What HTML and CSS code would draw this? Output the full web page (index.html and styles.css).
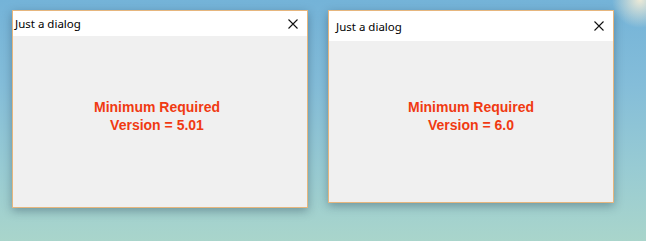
FILE: index.html
```html
<!DOCTYPE html>
<html lang="en">
<head>
  <meta charset="UTF-8" />
  <title>Just a dialog</title>
  <link rel="stylesheet" href="styles.css">
</head>
<body>
  <div class="desktop">
    <div class="dialog dialog-a">
      <div class="titlebar">
        <span class="title">Just a dialog</span>
        <svg class="close" width="10" height="10" viewBox="0 0 10 10">
          <path d="M0.5 0.5 L9.5 9.5 M9.5 0.5 L0.5 9.5" stroke="#111" stroke-width="1.1" fill="none" />
        </svg>
      </div>
      <div class="content">
        <p class="message">Minimum Required<br/>Version = 5.01</p>
      </div>
    </div>

    <div class="dialog dialog-b">
      <div class="titlebar">
        <span class="title">Just a dialog</span>
        <svg class="close" width="10" height="10" viewBox="0 0 10 10">
          <path d="M0.5 0.5 L9.5 9.5 M9.5 0.5 L0.5 9.5" stroke="#111" stroke-width="1.1" fill="none" />
        </svg>
      </div>
      <div class="content">
        <p class="message">Minimum Required<br/>Version = 6.0</p>
      </div>
    </div>
  </div>
</body>
</html>
```

FILE: styles.css
```css
html, body {
  margin: 0;
  height: 100%;
}
body {
  font-family: "Liberation Sans", Arial, sans-serif;
  background:
    radial-gradient(circle at 640px 0px, rgba(250,240,215,0.9) 0, rgba(250,240,215,0) 28px),
    linear-gradient(180deg, #74b3d8 0%, #84bdd9 35%, #98cbd3 70%, #a9d5cb 100%);
  overflow: hidden;
}
.desktop {
  display: flex;
  align-items: flex-start;
  gap: 20px;
  padding: 10px 0 0 12px;
}
.dialog {
  display: flex;
  flex-direction: column;
  box-sizing: border-box;
  border: 1px solid #e6b67e;
  background-color: #f0f0f0;
  box-shadow: 0 3px 9px rgba(20,40,60,0.35);
}
.dialog-a {
  width: 296px;
  height: 198px;
}
.dialog-b {
  width: 286px;
  height: 193px;
}
.titlebar {
  display: flex;
  align-items: center;
  justify-content: space-between;
  background-color: #fff;
  padding-right: 9px;
  flex: none;
}
.dialog-a .titlebar {
  height: 25px;
  padding-left: 2px;
}
.dialog-b .titlebar {
  height: 30px;
  padding-left: 7px;
}
.title {
  font-family: "Noto Sans", "Open Sans", sans-serif;
  font-size: 11.5px;
  color: #000;
}
.close {
  display: block;
}
.content {
  flex: 1;
  display: flex;
  align-items: center;
  justify-content: center;
  padding-bottom: 12px;
}
.dialog-a .content {
  padding-right: 6px;
}
.message {
  margin: 0;
  text-align: center;
  font-weight: bold;
  font-size: 14px;
  line-height: 18px;
  color: #f03a12;
}
```
